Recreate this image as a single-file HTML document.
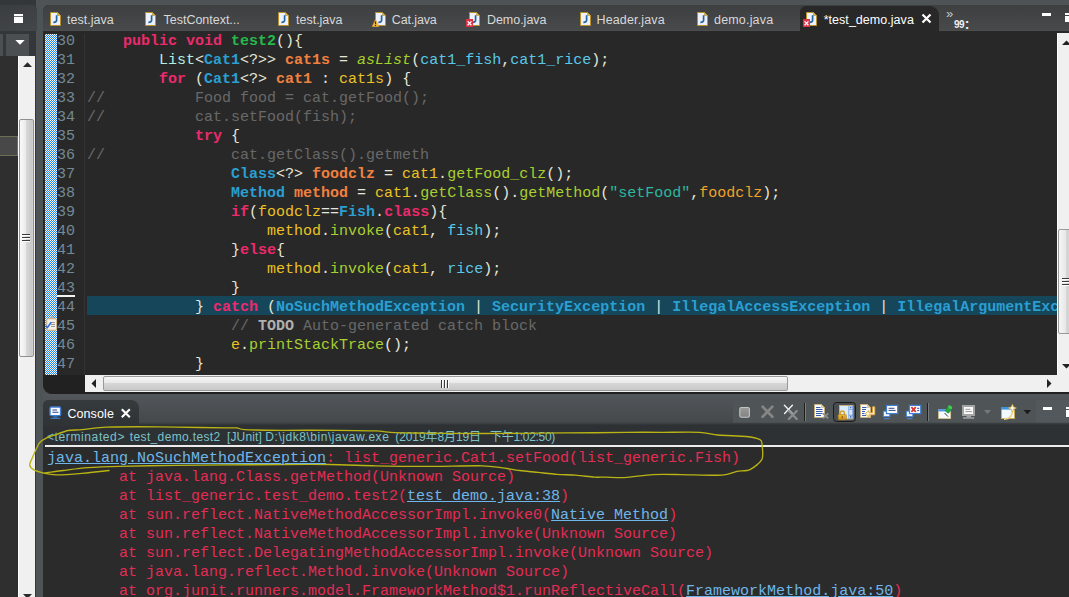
<!DOCTYPE html>
<html>
<head>
<meta charset="utf-8">
<title>Eclipse</title>
<style>
html,body{margin:0;padding:0;}
body{width:1069px;height:597px;overflow:hidden;position:relative;background:#4e5356;font-family:"Liberation Sans","Noto Sans CJK SC",sans-serif;font-size:12px;color:#ddd;}
.abs{position:absolute;}
/* ---------- left panel ---------- */
#left{left:0;top:0;width:36px;height:597px;background:#33373a;}
#left .top{left:0;top:5px;width:37px;height:26px;background:linear-gradient(160deg,#3a3d3f,#444749);border-radius:0 5px 0 0;}
#left .tb{left:0;top:31px;width:36px;height:25px;background:#33373a;}
#left .ddbtn{left:6px;top:34px;width:23px;height:22px;background:#4b4f52;}
#left .ddbtn0{left:0;top:34px;width:3px;height:22px;background:#4b4f52;}
#left .tree{left:0;top:56px;width:18px;height:541px;background:#2f2f2f;}
#left .sb{left:18px;top:56px;width:17px;height:541px;background:#f0f0f0;border-left:1px solid #fff;box-sizing:border-box;}
#left .thumb{left:19px;top:119px;width:15px;height:238px;background:linear-gradient(90deg,#fafafa 0%,#ececec 42%,#d8d8d8 50%,#c8c8ca 92%,#d8d8d8 100%);border:1px solid #8f8f8f;border-radius:2px;box-sizing:border-box;}
#left .sel{left:0;top:136px;width:18px;height:20px;background:#484848;border:1px solid #6e6e55;border-left:none;box-sizing:border-box;}
/* ---------- editor ---------- */
#topstrip{left:0;top:0;width:1069px;height:5px;background:#4e5356;}
#edpanel{left:43px;top:5px;width:1030px;height:389px;background:#282828;border-radius:6px 0 0 9px;}
#tabbar{left:43px;top:5px;width:1030px;height:26px;background:linear-gradient(180deg,#3d3f41,#47494b);border-radius:6px 0 0 0;border-bottom:1px solid #4b4d4f;box-sizing:border-box;}
.tab{top:7px;height:25px;line-height:27px;color:#d8d8d8;font-size:12.5px;white-space:nowrap;}
#acttab{left:800px;top:6px;width:139px;height:26px;background:#282828;border-radius:6px 9px 0 0;}
#ruler{left:45px;top:34px;width:12px;height:341px;background:#8fc0fd;background-image:conic-gradient(#fdf9f0 25%,#2084fa 0 50%,#fdf9f0 0 75%,#2084fa 0);background-size:2px 2px;}
#code{left:87px;top:32px;width:970px;height:343px;overflow:hidden;}
.ln{left:57px;width:24px;height:19px;line-height:19px;font:15px/19px "Liberation Mono",monospace;color:#738a96;}
.cl{left:0;height:19px;white-space:pre;font:15px/19px "Liberation Mono",monospace;color:#e6e6d8;}
.k{color:#ec2a6c;font-weight:bold;}
.m{color:#27b84d;font-weight:bold;}
.i{color:#b2efe3;}
.c{color:#2a9fd2;font-weight:bold;}
.d{color:#f08040;font-weight:bold;}
.v{color:#ecc224;}
.s{color:#a6d02a;font-style:italic;}
.f{color:#5ac8e8;}
.g{color:#686868;}
.n{color:#a8d030;}
.t{color:#2cb8a0;}
.p{color:#f0a428;}
.td{color:#b0b0b0;font-weight:bold;}

/* scrollbars */
#vsb{left:1057px;top:33px;width:17px;height:342px;background:#f0f0f0;border-left:1px solid #fff;box-sizing:border-box;}
#vthumb{left:1058px;top:229px;width:16px;height:105px;background:linear-gradient(90deg,#f6f6f6 0%,#e8e8e8 47%,#d6d6d6 50%,#cccccc 100%);border:1px solid #999;border-radius:2px;box-sizing:border-box;}
#hsb{left:85px;top:375px;width:972px;height:17px;background:#f0f0f0;}
#hthumb{left:103px;top:376px;width:685px;height:15px;background:linear-gradient(180deg,#f6f6f6 0%,#e8e8e8 47%,#d6d6d6 50%,#c8c8c8 100%);border:1px solid #999;border-radius:2px;box-sizing:border-box;}
#edbot{left:43px;top:375px;width:1030px;height:19px;background:#212121;border-radius:0 0 0 9px;}
#corner{left:1057px;top:375px;width:12px;height:17px;background:#f0f0f0;}
#hl44{left:87px;top:296px;width:970px;height:19px;background:#16465a;}
#lnsep{left:84px;top:34px;width:1px;height:341px;background:#333;}
#ln43u{left:57px;top:295px;width:18px;height:2px;background:#f2f2f2;}
#conline{left:45px;top:445px;width:1026px;height:2px;background:#ececec;}
.grip i{position:absolute;background:#3a3a3a;}
.gh i{left:0;width:8px;height:1px;box-shadow:0 1px 0 #fff;}
.gv i{top:0;width:1px;height:8px;box-shadow:1px 0 0 #fff;}
/* ---------- console ---------- */
#conpanel{left:43px;top:425px;width:1030px;height:180px;background:#2b2b2b;}
#condescbg{left:43px;top:425px;width:1030px;height:20px;background:#2d3134;}
#conbar{left:43px;top:394px;width:1033px;height:31px;background:linear-gradient(180deg,#52575b,#44474a);}
#contab{left:733px;top:401px;width:303px;height:22px;background:#4f5457;}
#conshade{left:139px;top:422px;width:940px;height:3px;background:linear-gradient(180deg,rgba(45,49,52,0),rgba(45,49,52,0.9));}
#conmm{left:1036px;top:400px;width:40px;height:23px;background:#53585c;}
#conact{left:43px;top:400px;width:96px;height:26px;background:linear-gradient(180deg,#353a3d,#2f3336);border-radius:5px 8px 0 0;}
.cd{top:429px;height:17px;line-height:17px;color:#7cc2c8;font-size:12px;white-space:nowrap;}
.co{left:47px;height:19px;white-space:pre;font:15px/19px "Liberation Mono",monospace;color:#e42c55;}
.lk{color:#6fb6ea;text-decoration:underline;}
</style>
</head>
<body>
<div class="abs" id="topstrip"></div>

<!-- LEFT PANEL -->
<div class="abs" id="left">
  <div class="abs top"></div>
  <div class="abs tb"></div>
  <div class="abs ddbtn0"></div>
  <div class="abs ddbtn"></div>
  <svg class="abs" style="left:15px;top:40px" width="10" height="5" viewBox="0 0 10 5"><path d="M0.3 0H9.7L5 4.8Z" fill="#fff"/></svg>
  <div class="abs" style="left:14px;top:14px;width:9px;height:9px;background:#fff"></div>
  <div class="abs" style="left:14px;top:16px;width:9px;height:1px;background:#6a6d6f"></div>
  <div class="abs tree"></div>
  <div class="abs sel"></div>
  <div class="abs sb"></div>
  <div class="abs thumb"></div>
  <svg class="abs" style="left:23px;top:62px" width="9" height="5" viewBox="0 0 9 5"><path d="M0 5L4.5 0.3L9 5Z" fill="#2a2a2a"/></svg>
  <div class="abs grip gh" style="left:22px;top:234px;width:8px;height:8px"><i style="top:0"></i><i style="top:3px"></i><i style="top:6px"></i></div>
  <svg class="abs" style="left:23px;top:594px" width="9" height="5" viewBox="0 0 9 5"><path d="M0 0L4.5 4.7L9 0Z" fill="#2a2a2a"/></svg>
</div>

<!-- EDITOR -->
<div class="abs" id="edpanel"></div>
<div class="abs" id="tabbar"></div>
<div class="abs" id="acttab"></div>
<div class="abs tab" style="left:66.9px;letter-spacing:0.037px">test.java</div>
<div class="abs tab" style="left:163.6px;letter-spacing:-0.024px">TestContext...</div>
<div class="abs tab" style="left:296.1px;letter-spacing:-0.029px">test.java</div>
<div class="abs tab" style="left:391.8px;letter-spacing:-0.120px">Cat.java</div>
<div class="abs tab" style="left:486.9px;letter-spacing:-0.017px">Demo.java</div>
<div class="abs tab" style="left:596.5px;letter-spacing:0.144px">Header.java</div>
<div class="abs tab" style="left:714.0px;letter-spacing:0.179px">demo.java</div>
<div class="abs tab" style="left:823.7px;color:#fff;letter-spacing:0.037px">*test_demo.java</div>


<!-- tab icons -->
<svg class="abs" style="left:50px;top:12px" width="12" height="15" viewBox="0 0 12 15"><path d="M0.5 0.5H7.5L10.5 3.5V13.5H0.5Z" fill="#eef1fb" stroke="#b8902c"/><path d="M7.5 0.5V3.5H10.5Z" fill="#d8b050" stroke="#b8902c" stroke-width="0.6"/><path d="M6.6 3.2V8.2Q6.6 10.4 3.4 10.3" fill="none" stroke="#2264a2" stroke-width="1.7"/></svg>
<svg class="abs" style="left:145px;top:12px" width="12" height="15" viewBox="0 0 12 15"><path d="M0.5 0.5H7.5L10.5 3.5V13.5H0.5Z" fill="#eef1fb" stroke="#b8902c"/><path d="M7.5 0.5V3.5H10.5Z" fill="#d8b050" stroke="#b8902c" stroke-width="0.6"/><path d="M6.6 3.2V8.2Q6.6 10.4 3.4 10.3" fill="none" stroke="#2264a2" stroke-width="1.7"/></svg>
<svg class="abs" style="left:278px;top:12px" width="12" height="15" viewBox="0 0 12 15"><path d="M0.5 0.5H7.5L10.5 3.5V13.5H0.5Z" fill="#eef1fb" stroke="#b8902c"/><path d="M7.5 0.5V3.5H10.5Z" fill="#d8b050" stroke="#b8902c" stroke-width="0.6"/><path d="M6.6 3.2V8.2Q6.6 10.4 3.4 10.3" fill="none" stroke="#2264a2" stroke-width="1.7"/></svg>
<svg class="abs" style="left:580px;top:12px" width="12" height="15" viewBox="0 0 12 15"><path d="M0.5 0.5H7.5L10.5 3.5V13.5H0.5Z" fill="#eef1fb" stroke="#b8902c"/><path d="M7.5 0.5V3.5H10.5Z" fill="#d8b050" stroke="#b8902c" stroke-width="0.6"/><path d="M6.6 3.2V8.2Q6.6 10.4 3.4 10.3" fill="none" stroke="#2264a2" stroke-width="1.7"/></svg>
<svg class="abs" style="left:697px;top:12px" width="12" height="15" viewBox="0 0 12 15"><path d="M0.5 0.5H7.5L10.5 3.5V13.5H0.5Z" fill="#eef1fb" stroke="#b8902c"/><path d="M7.5 0.5V3.5H10.5Z" fill="#d8b050" stroke="#b8902c" stroke-width="0.6"/><path d="M6.6 3.2V8.2Q6.6 10.4 3.4 10.3" fill="none" stroke="#2264a2" stroke-width="1.7"/></svg>
<svg class="abs" style="left:375px;top:12px" width="12" height="15" viewBox="0 0 12 15"><path d="M0.5 0.5H7.5L10.5 3.5V13.5H0.5Z" fill="#eef1fb" stroke="#b8902c"/><path d="M7.5 0.5V3.5H10.5Z" fill="#d8b050" stroke="#b8902c" stroke-width="0.6"/><path d="M6.6 3.2V8.2Q6.6 10.4 3.4 10.3" fill="none" stroke="#2264a2" stroke-width="1.7"/></svg>
<svg class="abs" style="left:372px;top:19px" width="8" height="8" viewBox="0 0 8 8"><path d="M3.5 0.3L7 7.7H0Z" fill="#f2b840" stroke="#d89820" stroke-width="0.5"/><path d="M3.5 2.4V5.2M3.5 6V6.9" stroke="#3a2a08" stroke-width="1.1"/></svg>
<svg class="abs" style="left:469px;top:12px" width="12" height="15" viewBox="0 0 12 15"><path d="M0.5 0.5H7.5L10.5 3.5V13.5H0.5Z" fill="#eef1fb" stroke="#b8902c"/><path d="M7.5 0.5V3.5H10.5Z" fill="#d8b050" stroke="#b8902c" stroke-width="0.6"/><path d="M6.6 3.2V8.2Q6.6 10.4 3.4 10.3" fill="none" stroke="#2264a2" stroke-width="1.7"/></svg>
<svg class="abs" style="left:466px;top:19px" width="8" height="8" viewBox="0 0 8 8"><rect width="7" height="8" fill="#dc3248"/><path d="M1.6 2.4L5.4 6.2M5.4 2.4L1.6 6.2" stroke="#fff" stroke-width="1.3"/></svg>
<svg class="abs" style="left:806px;top:12px" width="12" height="15" viewBox="0 0 12 15"><path d="M0.5 0.5H7.5L10.5 3.5V13.5H0.5Z" fill="#eef1fb" stroke="#b8902c"/><path d="M7.5 0.5V3.5H10.5Z" fill="#d8b050" stroke="#b8902c" stroke-width="0.6"/><path d="M6.6 3.2V8.2Q6.6 10.4 3.4 10.3" fill="none" stroke="#2264a2" stroke-width="1.7"/></svg>
<svg class="abs" style="left:803px;top:19px" width="8" height="8" viewBox="0 0 8 8"><rect width="7" height="8" fill="#dc3248"/><path d="M1.6 2.4L5.4 6.2M5.4 2.4L1.6 6.2" stroke="#fff" stroke-width="1.3"/></svg>

<!-- active tab close, chevron, min/max -->
<svg class="abs" style="left:921px;top:13px" width="11" height="11" viewBox="0 0 11 11"><path d="M1.5 1.5L9.5 9.5M9.5 1.5L1.5 9.5" stroke="#fff" stroke-width="2.2"/></svg>
<div class="abs" style="left:946px;top:7px;font-size:13px;line-height:13px;color:#c8c8c8">»</div>
<div class="abs" style="left:954px;top:18px;font-size:10px;line-height:10px;font-weight:bold;color:#eeeef6;letter-spacing:-0.5px;white-space:nowrap">99<span style="font-size:14px;line-height:10px;letter-spacing:0;position:relative;top:0.5px;left:0.5px">:</span></div>
<div class="abs" style="left:1042px;top:13px;width:9px;height:3px;background:#fff"></div>
<div class="abs" style="left:1065px;top:13px;width:9px;height:9px;background:#fff;border-top:2px solid #fff;box-sizing:border-box"></div>
<div class="abs" style="left:1065px;top:15px;width:9px;height:1px;background:#404346"></div>

<div class="abs" id="hl44"></div>
<div class="abs" id="lnsep"></div>
<div class="abs" id="ln43u"></div>
<div class="abs" id="ruler"></div>
<div class="abs ln" style="top:32px">30</div>
<div class="abs ln" style="top:51px">31</div>
<div class="abs ln" style="top:70px">32</div>
<div class="abs ln" style="top:89px">33</div>
<div class="abs ln" style="top:108px">34</div>
<div class="abs ln" style="top:127px">35</div>
<div class="abs ln" style="top:146px">36</div>
<div class="abs ln" style="top:165px">37</div>
<div class="abs ln" style="top:184px">38</div>
<div class="abs ln" style="top:203px">39</div>
<div class="abs ln" style="top:222px">40</div>
<div class="abs ln" style="top:241px">41</div>
<div class="abs ln" style="top:260px">42</div>
<div class="abs ln" style="top:279px">43</div>
<div class="abs ln" style="top:298px">44</div>
<div class="abs ln" style="top:317px">45</div>
<div class="abs ln" style="top:336px">46</div>
<div class="abs ln" style="top:355px">47</div>

<svg class="abs" style="left:45px;top:315px" width="13" height="16" viewBox="0 0 13 16"><path d="M4.5 3.2L7 0.8L9.5 3.2V4.5H4.5Z" fill="#a8aab4"/><rect x="1.8" y="3.8" width="9.8" height="11.4" rx="1" fill="#f4f0ea" stroke="#d6ae7c" stroke-width="1"/><path d="M6 7.5H10M6 9.5H10M6 11.5H10" stroke="#8a8c96" stroke-width="0.9"/><path d="M0.3 10.8L2.4 12.6L6.2 7.2" fill="none" stroke="#2f6fe0" stroke-width="1.6"/></svg>

<div class="abs" id="code">
<div class="abs cl" style="top:0px">    <span class="k">public</span> <span class="k">void</span> <span class="m">test2</span>(){</div>
<div class="abs cl" style="top:19px">        <span class="i">List</span>&lt;<span class="c">Cat1</span>&lt;?&gt;&gt; <span class="d">cat1s</span> = <span class="s">asList</span>(<span class="f">cat1_fish</span>,<span class="f">cat1_rice</span>);</div>
<div class="abs cl" style="top:38px">        <span class="k">for</span> (<span class="c">Cat1</span>&lt;?&gt; <span class="d">cat1</span> : <span class="v">cat1s</span>) {</div>
<div class="abs cl" style="top:57px"><span class="g">//          Food food = cat.getFood();</span></div>
<div class="abs cl" style="top:76px"><span class="g">//          cat.setFood(fish);</span></div>
<div class="abs cl" style="top:95px">            <span class="k">try</span> {</div>
<div class="abs cl" style="top:114px"><span class="g">//              cat.getClass().getmeth</span></div>
<div class="abs cl" style="top:133px">                <span class="c">Class</span>&lt;?&gt; <span class="d">foodclz</span> = <span class="v">cat1</span>.<span class="n">getFood_clz</span>();</div>
<div class="abs cl" style="top:152px">                <span class="c">Method</span> <span class="d">method</span> = <span class="v">cat1</span>.<span class="n">getClass</span>().<span class="n">getMethod</span>(<span class="t">"setFood"</span>,<span class="p">foodclz</span>);</div>
<div class="abs cl" style="top:171px">                <span class="k">if</span>(<span class="v">foodclz</span>==<span class="c">Fish</span>.<span class="k">class</span>){</div>
<div class="abs cl" style="top:190px">                    <span class="v">method</span>.<span class="n">invoke</span>(<span class="v">cat1</span>, <span class="f">fish</span>);</div>
<div class="abs cl" style="top:209px">                }<span class="k">else</span>{</div>
<div class="abs cl" style="top:228px">                    <span class="v">method</span>.<span class="n">invoke</span>(<span class="v">cat1</span>, <span class="f">rice</span>);</div>
<div class="abs cl" style="top:247px">                }</div>
<div class="abs cl hl" style="top:266px">            } <span class="k">catch</span> (<span class="c">NoSuchMethodException</span> | <span class="c">SecurityException</span> | <span class="c">IllegalAccessException</span> | <span class="c">IllegalArgumentException</span> | <span class="c">InvocationTargetException</span> e) {</div>
<div class="abs cl" style="top:285px">                <span class="g">// </span><span class="td">TODO</span><span class="g"> Auto-generated catch block</span></div>
<div class="abs cl" style="top:304px">                <span class="v">e</span>.<span class="n">printStackTrace</span>();</div>
<div class="abs cl" style="top:323px">            }</div>

</div>


<!-- editor scrollbars -->
<div class="abs" id="vsb"></div>
<div class="abs" id="vthumb"></div>
<svg class="abs" style="left:1062px;top:40px" width="9" height="5" viewBox="0 0 9 5"><path d="M0 5L4.5 0.5L9 5Z" fill="#222"/></svg>
<svg class="abs" style="left:1062px;top:364px" width="9" height="5" viewBox="0 0 9 5"><path d="M0 0L4.5 4.5L9 0Z" fill="#222"/></svg>
<div class="abs grip gh" style="left:1062px;top:278px;width:8px;height:8px"><i style="top:0"></i><i style="top:3px"></i><i style="top:6px"></i></div>
<div class="abs" id="edbot"></div>
<div class="abs" id="hsb"></div>
<div class="abs" id="hthumb"></div>
<div class="abs" id="corner"></div>
<svg class="abs" style="left:91px;top:379px" width="5" height="9" viewBox="0 0 5 9"><path d="M5 0L0.5 4.5L5 9Z" fill="#222"/></svg>
<svg class="abs" style="left:1047px;top:379px" width="5" height="9" viewBox="0 0 5 9"><path d="M0 0L4.5 4.5L0 9Z" fill="#222"/></svg>
<div class="abs grip gv" style="left:441px;top:380px;width:8px;height:8px"><i style="left:0"></i><i style="left:3px"></i><i style="left:6px"></i></div>

<!-- CONSOLE -->
<div class="abs" id="conpanel"></div>
<div class="abs" id="condescbg"></div>
<div class="abs" id="conbar"></div>
<div class="abs" id="contab"></div>
<div class="abs" id="conmm"></div>
<div class="abs" id="conshade"></div>
<div class="abs" id="conact"></div>
<div class="abs tab" style="left:67.4px;top:401px;color:#fff;letter-spacing:0.1px">Console</div>
<div class="abs cd" style="left:47.0px;letter-spacing:0.607px">&lt;terminated&gt;</div>
<div class="abs cd" style="left:129.8px;letter-spacing:0.361px">test_demo.test2</div>
<div class="abs cd" style="left:227.0px;letter-spacing:0.141px">[JUnit]</div>
<div class="abs cd" style="left:265.3px;letter-spacing:0.540px">D:\jdk8\bin\javaw.exe</div>
<div class="abs cd" style="left:395.3px;letter-spacing:-0.090px">(2019年8月19日</div>
<div class="abs cd" style="left:490.0px;letter-spacing:-0.300px">下午1:02:50)</div>



<!-- console toolbar icons -->
<svg class="abs" style="left:732px;top:398px" width="308" height="28" viewBox="732 398 308 28">
<defs>
<linearGradient id="gsq" x1="0" y1="0" x2="0" y2="1"><stop offset="0" stop-color="#9a9a9a"/><stop offset="1" stop-color="#828282"/></linearGradient>
<linearGradient id="glock" x1="0" y1="0" x2="0" y2="1"><stop offset="0" stop-color="#f0c040"/><stop offset="1" stop-color="#c88a18"/></linearGradient>
</defs>
<!-- stop -->
<rect x="739.8" y="407.5" width="9.6" height="9.8" rx="1.5" fill="url(#gsq)" stroke="#c4c4c4" stroke-width="1.1"/>
<!-- remove -->
<path d="M762.6 406.6L772.4 416.8M772.4 406.6L762.6 416.8" stroke="#868686" stroke-width="2.7" stroke-linecap="round"/>
<!-- remove all -->
<path d="M784.4 405.3L792.4 413.4M792.4 405.3L784.6 413.4" stroke="#f2f2f2" stroke-width="1.4" stroke-linecap="round"/>
<path d="M788.8 411L796.8 419M796.8 411L788.8 419" stroke="#8c8c8c" stroke-width="2.2" stroke-linecap="round"/>
<!-- sep -->
<rect x="804" y="403" width="1" height="18" fill="#1e1e1e"/><rect x="805" y="403" width="1" height="18" fill="#787c7e"/>
<!-- clear console: doc + x -->
<path d="M814.5 404.5H821.5L824.5 407.5V417.5H814.5Z" fill="#fdfdfd" stroke="#c8b07c"/>
<path d="M821.5 404.5V407.5H824.5Z" fill="#e8d098" stroke="#c8b07c" stroke-width="0.6"/>
<path d="M816 407.5H820.5M816 409.5H822.5M816 411.5H822.5M816 413.5H822.5M816 415.5H821" stroke="#3c5cae" stroke-width="1"/>
<path d="M823 413.4L828.2 418.4M828.2 413.4L823 418.4" stroke="#8e8e8e" stroke-width="1.7"/>
<!-- scroll lock (selected) -->
<rect x="833.5" y="402.5" width="22" height="19" rx="3" fill="#474c4f" stroke="#1b1b1b"/>
<rect x="839.5" y="405.5" width="13.5" height="13.5" fill="#d8ecfd" stroke="#c8b080"/>
<rect x="848.5" y="406" width="4.5" height="12.6" fill="#5a8ad8"/>
<rect x="849.2" y="409.6" width="3.2" height="5.2" fill="#dfe8f6"/>
<rect x="849.2" y="406.4" width="3.2" height="2.6" fill="#e8f0fa"/><rect x="849.2" y="415.6" width="3.2" height="2.6" fill="#e8f0fa"/>
<circle cx="850.8" cy="407.7" r="0.8" fill="#2848a0"/><circle cx="850.8" cy="416.9" r="0.8" fill="#2848a0"/>
<path d="M840.2 415V413.2A2.1 2.3 0 0 1 844.4 413.2V415" fill="none" stroke="#d8a428" stroke-width="1.5"/>
<rect x="838.2" y="414.6" width="8.2" height="5.2" rx="0.8" fill="url(#glock)" stroke="#b07a10" stroke-width="0.6"/>
<rect x="841.8" y="416.2" width="1" height="2" fill="#6a4a08"/>
<!-- word wrap: doc + arrow -->
<path d="M860.5 404.5H867.5L870.5 407.5V417.5H860.5Z" fill="#fdfdfd" stroke="#c8b07c"/>
<path d="M867.5 404.5V407.5H870.5Z" fill="#e8d098" stroke="#c8b07c" stroke-width="0.6"/>
<path d="M862 407.5H866.5M862 409.5H866M862 411.5H865M862 413.5H864.5M862 415.5H866" stroke="#3c5cae" stroke-width="1"/>
<path d="M872.6 406.8H874.8V414.8H869V417L865.2 413.8L869 410.6V412.8H872.6Z" fill="#fff6e0" stroke="#e0a030" stroke-width="0.9" stroke-linejoin="round"/>
<!-- display selected console (blue monitors) -->
<rect x="883.4" y="411.2" width="6.4" height="5.4" fill="#f0f6ff" stroke="#4a86d4" stroke-width="1"/>
<rect x="884" y="418.2" width="5.6" height="1" fill="#4a86d4"/>
<rect x="886.5" y="405.4" width="11.2" height="8.2" fill="#fafcff" stroke="#3f80d2" stroke-width="1.2"/>
<path d="M888.6 408.3H894.4M888.6 410.4H895.6" stroke="#34488e" stroke-width="1"/>
<!-- monitors with red x -->
<rect x="906.4" y="411.2" width="6.4" height="5.4" fill="#f0f6ff" stroke="#4a86d4" stroke-width="1"/>
<rect x="907" y="418.2" width="5.6" height="1" fill="#4a86d4"/>
<rect x="909.5" y="405.4" width="11.2" height="8.2" fill="#fafcff" stroke="#3f80d2" stroke-width="1.2"/>
<path d="M911.4 407.2L915.8 411.8M915.8 407.2L911.4 411.8" stroke="#e03030" stroke-width="1.7"/>
<path d="M917.2 408.3H919.2M917.2 410.6H919.2" stroke="#34488e" stroke-width="1"/>
<!-- sep -->
<rect x="927" y="403" width="1" height="18" fill="#1e1e1e"/><rect x="928" y="403" width="1" height="18" fill="#787c7e"/>
<!-- pin console -->
<rect x="938.6" y="409.5" width="12" height="9" fill="#f6faff" stroke="#d8c090" stroke-width="0.9"/>
<rect x="938.2" y="409.2" width="12.8" height="2.2" fill="#4a94e4"/>
<path d="M944.6 413L948 416.6" stroke="#303848" stroke-width="1"/>
<path d="M945.2 410.8L948.6 406L951.8 408.4L948.4 413.2Z" fill="#28a838" stroke="#1c8c2c" stroke-width="0.8" stroke-linejoin="round"/>
<ellipse cx="950.2" cy="407.2" rx="2.3" ry="1.5" transform="rotate(36 950.2 407.2)" fill="#48c858"/>
<!-- gray monitor -->
<rect x="963" y="406" width="11" height="9" fill="#fafafa" stroke="#a4a4a4" stroke-width="2"/>
<path d="M965.4 409.3H970.4M965.4 411.6H972" stroke="#9a9a9a" stroke-width="1"/>
<rect x="966.5" y="416" width="4.5" height="1.4" fill="#a4a4a4"/><rect x="963" y="417.4" width="11.2" height="1.2" fill="#b4b4b4"/>
<path d="M984 410H991L987.5 414Z" fill="#787878"/>
<!-- open console -->
<rect x="1001.5" y="407.5" width="13" height="11" fill="#f2f8ff" stroke="#d2aa50" stroke-width="0.9"/>
<rect x="1001" y="407" width="14" height="2.6" fill="#3c92e4"/>
<path d="M1004 419.2C1010 419 1012.6 415 1012.6 410" fill="none" stroke="#ecd088" stroke-width="1.6"/>
<path d="M1012.4 404.2L1013.6 407L1016.4 408L1013.6 409.2L1012.4 412L1011.2 409.2L1008.4 408L1011.2 407Z" fill="#fff4d0" stroke="#d8a838" stroke-width="0.7"/>
<path d="M1023.6 410H1031.2L1027.4 414.2Z" fill="#1a1a1a"/>
</svg>
<!-- console min/max -->
<div class="abs" style="left:1043px;top:407px;width:9px;height:3px;background:#fff"></div>
<div class="abs" style="left:1066px;top:407px;width:9px;height:10px;background:#fff"></div>
<div class="abs" style="left:1066px;top:409px;width:9px;height:1px;background:#50555a"></div>
<!-- console tab icon + close -->
<svg class="abs" style="left:48px;top:405px" width="16" height="16" viewBox="48 405 16 16">
<rect x="50" y="407" width="10.6" height="8.6" rx="1.2" fill="#fafcff" stroke="#3f7cd0" stroke-width="1.4"/>
<path d="M52.4 410H57M52.4 412.2H58.4" stroke="#30468e" stroke-width="1.1"/>
<rect x="53.4" y="416.4" width="4" height="1.2" fill="#3f7cd0"/><rect x="50.6" y="417.8" width="9.6" height="1.1" fill="#3f7cd0"/>
</svg>
<svg class="abs" style="left:120px;top:407px" width="12" height="12" viewBox="0 0 12 12"><path d="M1.8 2.2L9.8 10.2M9.8 2.2L1.8 10.2" stroke="#fff" stroke-width="2.1"/></svg>
<div class="abs" id="conline"></div>
<svg class="abs" style="left:26px;top:420px" width="744" height="64" viewBox="26 420 744 64"><path d="M109.0 470.5 C105.4 470.9 89.1 472.7 82.0 473.3 C74.9 473.9 60.9 474.8 55.9 474.8 C50.9 474.8 47.7 474.0 44.7 473.3 C41.7 472.6 35.5 470.7 33.5 469.6 C31.5 468.5 29.8 466.5 29.7 464.9 C29.6 463.3 31.6 459.6 32.5 457.4 C33.4 455.2 35.5 450.5 36.5 448.5 C37.5 446.5 38.6 443.6 40.0 442.2 C41.4 440.8 44.5 438.9 46.7 437.8 C48.9 436.7 53.9 435.3 56.8 434.3 C59.7 433.3 64.8 431.1 68.2 430.5 C71.6 429.9 77.0 430.1 82.1 429.6 C87.2 429.1 98.9 427.5 106.4 427.1 C113.9 426.7 129.1 426.7 138.3 426.7 C147.5 426.7 164.0 426.9 175.7 427.1 C187.4 427.3 217.8 427.8 226.0 427.9 C234.2 428.0 234.5 427.7 237.0 427.9 C239.5 428.1 238.7 429.4 244.7 429.7 C250.7 430.0 269.6 430.2 282.0 430.3 C294.4 430.4 325.5 430.2 338.0 430.3 C350.5 430.4 368.2 430.6 375.7 430.9 C383.2 431.2 387.7 432.4 394.4 432.7 C401.1 433.0 414.3 433.0 426.0 433.1 C437.7 433.2 467.1 433.5 482.0 433.5 C496.9 433.5 523.1 433.2 538.0 433.1 C552.9 433.0 582.3 432.8 594.0 432.7 C605.7 432.6 616.9 432.4 626.0 432.3 C635.1 432.2 652.2 432.3 662.0 432.3 C671.8 432.3 692.0 431.9 699.5 432.3 C707.0 432.7 711.8 434.4 718.0 435.0 C724.2 435.6 740.4 435.9 746.0 436.5 C751.6 437.1 757.9 438.6 760.0 439.6 C762.1 440.6 761.7 441.7 762.0 444.3 C762.3 446.9 763.6 455.9 762.0 459.3 C760.4 462.7 753.3 468.0 750.0 469.6 C746.7 471.2 740.7 470.7 737.0 471.4 C733.3 472.1 729.5 474.8 722.0 475.2 C714.5 475.6 690.2 474.7 681.0 474.6 C671.8 474.5 660.3 474.2 652.8 474.6 C645.3 475.0 630.9 477.3 624.7 477.6 C618.5 477.9 610.0 477.2 606.0 477.1 C602.0 477.0 598.4 477.4 594.4 477.1 C590.4 476.8 580.7 475.6 575.7 475.2 C570.7 474.8 562.0 474.7 557.0 474.3 C552.0 473.9 543.0 472.9 538.0 472.4 C533.0 471.9 524.4 471.1 519.5 470.5 C514.6 469.9 506.0 468.3 501.0 467.7 C496.0 467.1 492.0 466.0 482.0 465.8 C472.0 465.6 440.2 466.4 426.0 466.4 C411.8 466.4 388.6 466.1 375.7 465.8 C362.8 465.5 341.5 464.7 329.0 464.5 C316.5 464.3 295.7 464.4 282.0 464.5 C268.3 464.6 240.2 464.8 226.0 464.9 C211.8 465.0 189.9 465.1 175.7 465.3 C161.5 465.5 131.2 466.1 119.5 466.4 C107.8 466.7 95.2 467.2 87.7 467.7 C80.2 468.2 69.1 469.8 63.4 470.5 C57.7 471.2 47.2 472.7 44.7 473.0" fill="none" stroke="#b9b414" stroke-width="1.35" stroke-linejoin="round" stroke-linecap="round"/></svg>
<div class="abs co" style="top:449px"><span class="lk">java.lang.NoSuchMethodException</span>: list_generic.Cat1.setFood(list_generic.Fish)</div>
<div class="abs co" style="top:468px">        at java.lang.Class.getMethod(Unknown Source)</div>
<div class="abs co" style="top:487px">        at list_generic.test_demo.test2(<span class="lk">test_demo.java:38</span>)</div>
<div class="abs co" style="top:506px">        at sun.reflect.NativeMethodAccessorImpl.invoke0(<span class="lk">Native Method</span>)</div>
<div class="abs co" style="top:525px">        at sun.reflect.NativeMethodAccessorImpl.invoke(Unknown Source)</div>
<div class="abs co" style="top:544px">        at sun.reflect.DelegatingMethodAccessorImpl.invoke(Unknown Source)</div>
<div class="abs co" style="top:563px">        at java.lang.reflect.Method.invoke(Unknown Source)</div>
<div class="abs co" style="top:582px">        at org.junit.runners.model.FrameworkMethod$1.runReflectiveCall(<span class="lk">FrameworkMethod.java:50</span>)</div>

</body>
</html>
